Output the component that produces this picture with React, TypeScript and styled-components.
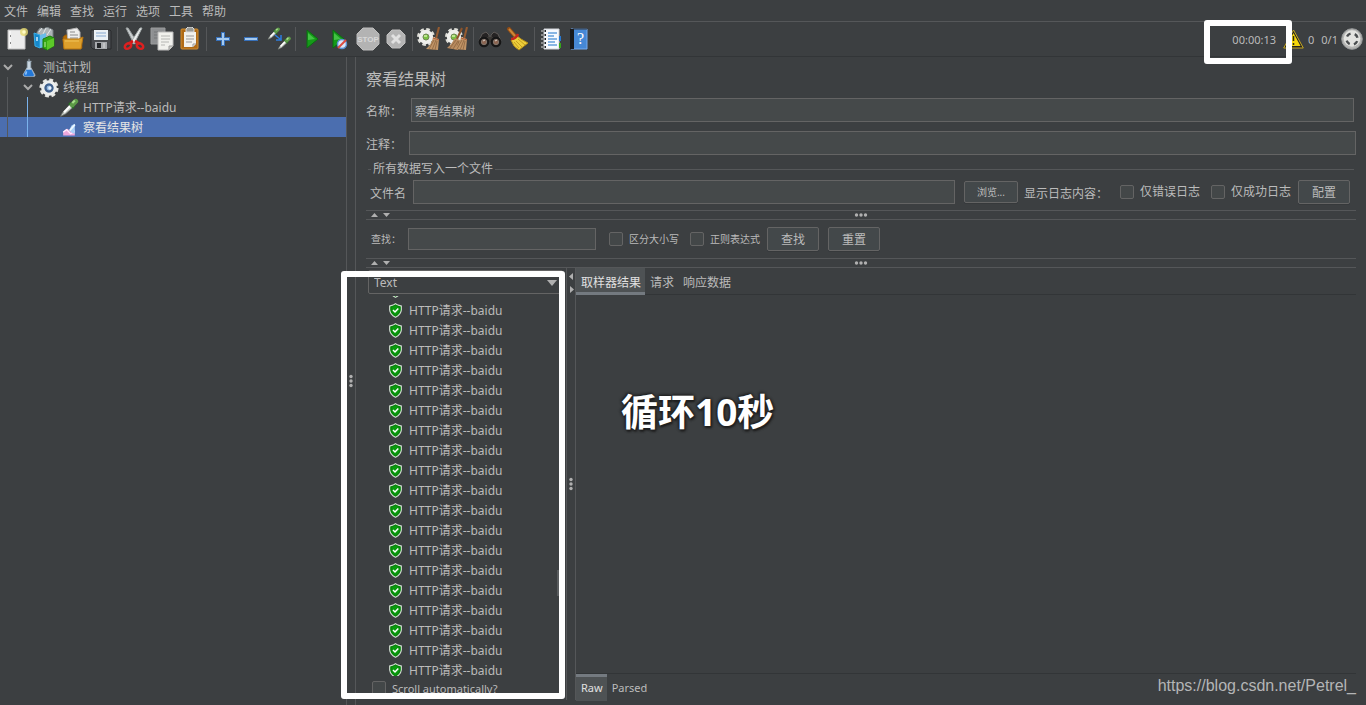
import React, { useLayoutEffect, useRef } from "react";
import styled, { createGlobalStyle } from "styled-components";

const c = {
  bg: "#3c3f41",
  field: "#45494a",
  border: "#646464",
  line: "#555759",
  dark: "#323537",
  text: "#bbbbbb",
  blue: "#4b6eaf",
  active: "#4e5254",
  bar: "#747a80",
};

const Global = createGlobalStyle`
  * { box-sizing: border-box; }
  body { margin: 0; background: ${c.bg}; }
  body, button, input, select { font-family: "Noto Sans", "Noto Sans CJK SC", sans-serif; color: ${c.text}; font-size: 12px; line-height: 18px; }
  svg { display: block; flex: none; }
`;

const Page = styled.div`
  height: 100vh;
  display: flex;
  flex-direction: column;
  overflow: hidden;
  white-space: nowrap;
`;
const MenuBar = styled.nav`
  display: flex;
  gap: 9px;
  height: 22px;
  padding: 3px 4px 0;
  border-bottom: 1px solid ${c.line};
`;
const MenuItem = styled.button`
  height: 18px;
  border: 0;
  padding: 0;
  background: none;
`;
const Toolbar = styled.div`
  position: relative;
  display: flex;
  align-items: center;
  height: 35px;
  padding: 0 3px;
  border-bottom: 1px solid ${c.dark};
`;
const ToolButton = styled.button`
  display: grid;
  place-items: center;
  width: 28px;
  height: 28px;
  padding: 0;
  border: 0;
  background: none;
`;
const ToolSeparator = styled.span`
  width: 1px;
  height: 24px;
  margin: 0 2px;
  background: ${c.line};
`;
const Status = styled.div`
  display: flex;
  align-items: center;
  margin-left: auto;
  font-size: 11px;
`;
const Elapsed = styled.span`
  padding-top: 2px;
  margin-right: 7px;
`;
const Count = styled.span`
  padding-top: 2px;
  margin: 0 3px 0 4px;
`;
const Highlight = styled.div`
  position: absolute;
  z-index: 2;
  border: 6px solid #fff;
  border-radius: 3px;
  pointer-events: none;
`;
const TimerHighlight = styled(Highlight)`
  top: -2px;
  right: 74px;
  width: 88px;
  height: 44px;
`;
const ResultsHighlight = styled(Highlight)`
  top: 214px;
  bottom: 6px;
  left: -15px;
  width: 224px;
`;
const Workspace = styled.div`
  display: flex;
  flex: 1;
  min-height: 0;
`;
const TreePanel = styled.aside`
  position: relative;
  width: 346px;
  flex: none;
`;
const TreeRow = styled.div<{ $level: number; $selected?: boolean }>`
  display: flex;
  align-items: center;
  gap: 4px;
  height: 20px;
  padding-top: 2px;
  padding-left: ${(p) => 3 + p.$level * 20}px;
  background: ${(p) => (p.$selected ? c.blue : "transparent")};
  color: ${(p) => (p.$selected ? "#e4e4e4" : c.text)};
`;
const Toggle = styled.span`
  display: flex;
  width: 12px;
`;
const Guide = styled.span<{ $level: number }>`
  position: absolute;
  left: ${(p) => 7 + p.$level * 20}px;
  top: ${(p) => 20 + p.$level * 20}px;
  height: ${(p) => 60 - p.$level * 20}px;
  width: 1px;
  background: ${(p) => (p.$level ? "#7ab2ec" : "#56595b")};
`;
const VerticalSplit = styled.div`
  position: relative;
  display: flex;
  flex-direction: column;
  align-items: center;
  justify-content: center;
  width: 10px;
  flex: none;
  border: solid ${c.line};
  border-width: 0 1px;
`;
const SplitArrows = styled.span`
  position: absolute;
  top: 4px;
  left: 0;
`;
const Editor = styled.main`
  position: relative;
  display: flex;
  flex-direction: column;
  flex: 1;
  min-width: 0;
  padding: 10px 10px 5px;
`;
const Title = styled.h1`
  margin: 0 0 7px;
  font-size: 16px;
  line-height: 24px;
  font-weight: 400;
`;
const FieldRow = styled.div<{ $inset?: boolean }>`
  display: flex;
  align-items: center;
  margin-bottom: ${(p) => (p.$inset ? 9 : 5)}px;
  padding-right: ${(p) => (p.$inset ? 2 : 0)}px;
`;
const FieldLabel = styled.label<{ $width: number }>`
  width: ${(p) => p.$width}px;
  flex: none;
  padding-top: 3px;
`;
const TextField = styled.input<{ $width?: number; $height?: number }>`
  flex: ${(p) => (p.$width ? "none" : "1")};
  width: ${(p) => (p.$width ? p.$width + "px" : "auto")};
  min-width: 0;
  height: ${(p) => p.$height ?? 24}px;
  padding: 2px 3px 0;
  border: 1px solid ${c.border};
  background: ${c.field};
  outline: 0;
`;
const FileGroup = styled.fieldset`
  min-width: 0;
  margin: 0 2px;
  padding: 2px 4px 6px 2px;
  border: 0;
  border-top: 1px solid ${c.line};
`;
const Legend = styled.legend`
  margin-left: 1px;
  padding: 0 2px;
`;
const FileRow = styled.div`
  display: flex;
  align-items: center;
`;
const Button = styled.button<{ $small?: boolean }>`
  width: ${(p) => (p.$small ? 54 : 52)}px;
  height: ${(p) => (p.$small ? 22 : 24)}px;
  padding: ${(p) => (p.$small ? 0 : 2)}px 0 0;
  border: 1px solid ${c.border};
  border-radius: 2px;
  background: #43484a;
  box-shadow: 0 1px 0 #36393b;
  font-size: ${(p) => (p.$small ? 10 : 12)}px;
`;
const BrowseButton = styled(Button)`
  margin: 0 6px 0 9px;
`;
const LogLabel = styled.span`
  width: 96px;
  padding-top: 3px;
`;
const Check = styled.label<{ $small?: boolean; $gap?: number }>`
  display: flex;
  align-items: center;
  gap: 6px;
  margin-right: ${(p) => p.$gap ?? 0}px;
  font-size: ${(p) => (p.$small ? 10 : 12)}px;
`;
const Box = styled.input`
  appearance: none;
  width: 14px;
  height: 14px;
  margin: 0;
  border: 1px solid ${c.border};
  border-radius: 2px;
  background: #434748;
`;
const HorizontalSplit = styled.div`
  display: grid;
  grid-template-columns: 1fr auto 1fr;
  align-items: center;
  height: 10px;
  flex: none;
  padding: 0 5px;
  border: solid ${c.line};
  border-width: 1px 0;
`;
const SearchRow = styled.div`
  display: flex;
  align-items: center;
  height: 38px;
  flex: none;
  padding-left: 5px;
`;
const SearchLabel = styled.label`
  width: 37px;
  font-size: 10px;
`;
const SearchOptions = styled.div`
  display: flex;
  margin-left: 13px;
`;
const SearchButtons = styled.div`
  display: flex;
  gap: 9px;
`;
const Results = styled.div`
  display: flex;
  flex: 1;
  min-height: 0;
`;
const SamplePane = styled.section`
  display: flex;
  flex-direction: column;
  width: 200px;
  flex: none;
  padding-top: 2px;
`;
const Combo = styled.div`
  position: relative;
  margin: 0 3px 2px 2px;
`;
const Select = styled.select`
  display: block;
  appearance: none;
  width: 100%;
  height: 24px;
  padding: 2px 5px 0;
  border: 1px solid ${c.border};
  border-radius: 2px;
  background: ${c.bg};
  outline: 0;
`;
const ComboArrow = styled.span`
  position: absolute;
  top: 10px;
  right: 6px;
  pointer-events: none;
`;
const SampleScroll = styled.div`
  position: relative;
  flex: 1;
  min-height: 0;
`;
const SampleList = styled.ul`
  height: 100%;
  margin: 0;
  padding: 0;
  overflow: hidden;
  list-style: none;
`;
const Sample = styled.li`
  display: flex;
  align-items: center;
  gap: 7px;
  height: 20px;
  padding-left: 23px;
`;
const Thumb = styled.span`
  position: absolute;
  right: 2px;
  top: 72%;
  width: 7px;
  height: 26px;
  background: #595c5e;
`;
const AutoScroll = styled.div`
  height: 24px;
  padding: 2px 6px;
`;
const AutoScrollText = styled.span`
  padding-top: 2px;
  font-size: 11px;
`;
const Detail = styled.section`
  display: flex;
  flex-direction: column;
  flex: 1;
  min-width: 0;
`;
const Tabs = styled.div<{ $bottom?: boolean }>`
  display: flex;
  height: 27px;
  flex: none;
  border: solid ${c.dark};
  border-width: ${(p) => (p.$bottom ? "1px 0 0" : "0 0 1px")};
`;
const Tab = styled.button<{ $active?: boolean; $bottom?: boolean }>`
  height: 27px;
  padding: ${(p) => (p.$bottom ? 0 : 3)}px 4px 0 5px;
  border: 0;
  font-size: ${(p) => (p.$bottom ? 11 : 12)}px;
  background: ${(p) => (p.$active ? c.active : "transparent")};
  color: ${(p) => (p.$active ? "#e0e0e0" : c.text)};
  box-shadow: ${(p) => (p.$active ? `inset 0 ${p.$bottom ? 3 : -3}px 0 ${c.bar}` : "none")};
`;
const DetailBody = styled.div`
  flex: 1;
`;
const Caption = styled.div`
  position: absolute;
  left: 265px;
  top: 328px;
  color: #fff;
  font: 700 37px/54px "Noto Sans", "Noto Sans CJK SC", sans-serif;
  text-shadow: 0 0 3px #202020, 1px 1px 3px #202020, -1px -1px 3px #202020, 1px 2px 2px #202020;
`;
const Watermark = styled.div`
  position: absolute;
  right: 10px;
  bottom: 8px;
  color: #b4b5b6;
  font: 16px/22px "Liberation Sans", sans-serif;
`;

const Svg = ({ size = 24, children }: { size?: number; children: React.ReactNode }) => (
  <svg width={size} height={size} viewBox="0 0 24 24" fill="none" aria-hidden="true">{children}</svg>
);

const Pipette = ({ x = 0, y = 0, s = 1 }: { x?: number; y?: number; s?: number }) => (
  <g transform={`translate(${x} ${y}) scale(${s})`}>
    <path d="M2 22L4 18L13 8L17 11L8 19Z" fill="#c9cec9" stroke="#737a73" strokeWidth="1" />
    <path d="M6 17L14 9" stroke="#fff" strokeWidth="2.5" />
    <path d="M12 6L18 12" stroke="#286a25" strokeWidth="3" />
    <path d="M16 8L20 4" stroke="#5c9a47" strokeWidth="6" strokeLinecap="round" />
    <path d="M16 6L19 3" stroke="#a8dc8c" strokeWidth="2.5" />
  </g>
);

const GearWithBroom = ({ double = false }: { double?: boolean }) => (
  <Svg>
    <circle cx="9" cy="10" r="7" stroke="#deded8" strokeWidth="4" strokeDasharray="3.3 2.2" />
    <circle cx="9" cy="10" r="5.2" fill="#ddd" stroke="#efefec" strokeWidth="4" />
    <circle cx="9" cy="10" r="3" fill="#7ac143" stroke="#728a55" />
    <path d="M7 9H10" stroke="#d4f0a8" strokeWidth="1.5" />
    {double && <><path d="M17 1L12 12" stroke="#8d542b" strokeWidth="2" /><path d="M10 11L15 13L13 23L2 21Q7 17 10 11" fill="#b88a5e" /><path d="M11 13L5 21M13 14L8 22M14 14L11 23" stroke="#8b6540" strokeWidth=".8" /></>}
    <path d="M22 0L19 12" stroke="#955b30" strokeWidth="2" />
    <path d="M16 10L22 12L21 23L9 22Q15 17 16 10" fill="#c09466" />
    <path d="M17 13L12 22M19 13L15 23M20 14L18 23" stroke="#8b6540" strokeWidth=".8" />
    <path d="M16 11L22 13" stroke="#b5603d" />
  </Svg>
);

const icons: Record<string, React.ReactNode> = {
  new: (
    <Svg>
      <path d="M3 3H20V22H3Z" fill="#ececec" stroke="#c3c3c3" />
      <path d="M5 4V21" stroke="#fff" /><path d="M5 9H6M5 16H6" stroke="#666" strokeWidth="1.5" />
      <circle cx="19" cy="5" r="4" fill="#e9dc72" opacity=".8" /><circle cx="19" cy="5" r="1.8" fill="#fffbc5" />
    </Svg>
  ),
  templates: (
    <Svg>
      <path d="M4 5L7 1L11 2L14 0L20 3V14H4Z" fill="#aeb4b7" stroke="#747c80" />
      <path d="M6 5L9 1M10 7L13 1M14 8L18 2" stroke="#e5e8e8" />
      <path d="M1 6L7 8V21L2 19Z" fill="#1688cb" stroke="#39aee8" /><path d="M7 8L13 6V20L7 21Z" fill="#69bce8" />
      <path d="M4 10V14" stroke="#d0edff" strokeWidth="1.5" />
      <path d="M10 12L17 9L21 11V19L14 23L10 21Z" fill="#35a713" stroke="#1b7c0b" /><path d="M14 14L21 11V19L14 23Z" fill="#5cc829" />
      <path d="M12 15V20" stroke="#bbed9c" />
    </Svg>
  ),
  open: (
    <Svg>
      <path d="M2 10L4 8H8L10 10H20L21 21H3Z" fill="#b36b05" stroke="#8a5510" />
      <path d="M6 3L16 1L19 5V16H7Z" fill="#eee" stroke="#b3b3b3" /><path d="M9 5H14M9 8H17M9 11H17" stroke="#8a8a8a" />
      <path d="M2 12H18L22 10L20 22H3Z" fill="#dda02c" stroke="#b97610" /><path d="M4 14H18" stroke="#f0c45b" />
    </Svg>
  ),
  save: (
    <Svg>
      <path d="M2 3H21L22 4V22H4L2 20Z" fill="#4a4c50" stroke="#292b2d" />
      <path d="M5 3H19V13H5Z" fill="#ebf0f5" /><path d="M7 6H17M7 9H17" stroke="#86a7cf" />
      <path d="M6 15H18V22H6Z" fill="#a8aaae" /><path d="M8 16H12V21H8Z" fill="#25272a" /><path d="M15 16V21" stroke="#ddd" />
    </Svg>
  ),
  cut: (
    <Svg>
      <path d="M4 1L6 1L15 15L12 17Z" fill="#ccd0d1" stroke="#9ba1a2" /><path d="M20 1L18 1L9 15L12 17Z" fill="#eceeee" stroke="#a7aeae" />
      <path d="M11 14L6 17M13 14L18 17" stroke="#cf1717" strokeWidth="3" />
      <ellipse cx="6" cy="19" rx="3.5" ry="2.5" transform="rotate(-35 6 19)" stroke="#dd2020" strokeWidth="2.5" />
      <ellipse cx="18" cy="19" rx="3.5" ry="2.5" transform="rotate(35 18 19)" stroke="#dd2020" strokeWidth="2.5" />
    </Svg>
  ),
  copy: (
    <Svg>
      <path d="M1 1H15V17H1Z" fill="#8e9092" stroke="#9a9c9d" /><path d="M4 5H12M4 8H9M4 11H8" stroke="#747678" />
      <path d="M8 5H23V19L19 23H8Z" fill="#f1f1ed" stroke="#bbb" /><path d="M11 9H20M11 12H20M11 15H19M11 18H15" stroke="#b5b6b3" />
      <path d="M19 23V19H23" fill="#cfcfc9" stroke="#999" />
    </Svg>
  ),
  paste: (
    <Svg>
      <rect x="3" y="2" width="17" height="20" rx="1" fill="#b06b15" stroke="#cf8f32" />
      <path d="M6 5H18V17L15 20H6Z" fill="#f2f2ec" /><path d="M8 9H16M8 12H16M8 15H14" stroke="#999" />
      <path d="M8 2L10 0H14L16 2V5H8Z" fill="#999b96" stroke="#ddd" /><path d="M15 20V17H18" stroke="#999" />
    </Svg>
  ),
  plus: <Svg><path d="M12 5V19M5 12H19" stroke="#3770b9" strokeWidth="4" /><path d="M12 6V18M6 12H18" stroke="#a5caef" strokeWidth="2" /></Svg>,
  minus: <Svg><path d="M5 12H19" stroke="#3770b9" strokeWidth="4" /><path d="M6 12H18" stroke="#a5caef" strokeWidth="2" /></Svg>,
  toggle: <Svg><Pipette x={0} y={0} s={0.56} /><Pipette x={10} y={9} s={0.6} /><path d="M8 8L13 12M14 8V13H9" stroke="#2c7ee0" strokeWidth="1.5" /></Svg>,
  start: <Svg><path d="M7 3L18 12L7 21Z" fill="#159a19" stroke="#0a6d10" /><path d="M8 6L15 12L8 13Z" fill="#43c244" /></Svg>,
  startNow: (
    <Svg><path d="M5 3L16 12L5 21Z" fill="#159a19" stroke="#0a6d10" /><path d="M6 6L13 12L6 13Z" fill="#43c244" />
      <circle cx="14" cy="17" r="4.5" fill="#dbe8f8" stroke="#5b91d1" strokeWidth="1.5" /><path d="M10 21L18 13" stroke="#dc4c41" strokeWidth="2" /></Svg>
  ),
  stop: (
    <Svg><path d="M7 1H17L23 7V17L17 23H7L1 17V7Z" fill="#b3b3b3" stroke="#bebebe" />
      <text x="12" y="15" textAnchor="middle" fontFamily="Liberation Sans" fontWeight="700" fontSize="8" fill="#d8d8d8">STOP</text></Svg>
  ),
  shutdown: <Svg><path d="M8 3H16L21 8V16L16 21H8L3 16V8Z" fill="#b4b4b4" stroke="#c0c0c0" /><path d="M8 8L16 16M16 8L8 16" stroke="#e1e1e1" strokeWidth="3" /></Svg>,
  clear: <GearWithBroom />,
  clearAll: <GearWithBroom double />,
  search: (
    <Svg>
      <path d="M4 7L8 5L11 8V14H1Z" fill="#252323" stroke="#5e5a57" /><path d="M20 7L16 5L13 8V14H23Z" fill="#252323" stroke="#5e5a57" />
      <path d="M9 10H15V15H9Z" fill="#393633" />
      <circle cx="6" cy="15" r="4.3" fill="#3c2e29" stroke="#161616" strokeWidth="2" /><circle cx="18" cy="15" r="4.3" fill="#3c2e29" stroke="#161616" strokeWidth="2" />
      <circle cx="6" cy="15" r="2.6" fill="#8c6450" stroke="#81766d" /><circle cx="18" cy="15" r="2.6" fill="#8c6450" stroke="#81766d" /><path d="M5 14L7 13M17 14L19 13" stroke="#ddd0c8" />
    </Svg>
  ),
  reset: (
    <Svg>
      <path d="M3 2L9 9" stroke="#8e4b16" strokeWidth="4" strokeLinecap="round" /><path d="M3 2L9 9" stroke="#ce8737" strokeWidth="2" />
      <path d="M10 8L15 12L22 16L13 23Q7 20 5 13Z" fill="#edcf3a" stroke="#b38c18" />
      <path d="M10 14L16 20M12 12L19 18M8 15L13 21" stroke="#c59d20" /><path d="M5 12Q10 12 12 7" stroke="#c52820" strokeWidth="2.5" />
    </Svg>
  ),
  functions: (
    <Svg>
      <path d="M5 2H20V22H5Z" fill="#f7faff" stroke="#d1d4d9" /><path d="M9 6H18M9 9H15M9 12H18M9 15H16M9 18H18" stroke="#1d72ca" strokeWidth="1.2" />
      <path d="M2 4H7M2 8H7M2 12H7M2 16H7M2 20H7" stroke="#202428" strokeWidth="2" /><path d="M2 4H6M2 8H6M2 12H6M2 16H6M2 20H6" stroke="#f1f1f1" />
      <path d="M21 9V14" stroke="#2778d0" strokeWidth="2" /><path d="M21 16V21" stroke="#37a51a" strokeWidth="2" />
    </Svg>
  ),
  help: (
    <Svg>
      <path d="M4 2H20V22H4Z" fill="#4688d6" stroke="#75aaf0" /><path d="M3 2H7V22H3Z" fill="#17191d" /><path d="M6 2H20" stroke="#252a30" />
      <text x="13.5" y="17" textAnchor="middle" fontFamily="Liberation Serif" fontSize="16" fill="#fff">?</text>
    </Svg>
  ),
};

const toolGroups: [string, string][][] = [
  [["new", "新建"], ["templates", "模板"], ["open", "打开"], ["save", "保存"]],
  [["cut", "剪切"], ["copy", "复制"], ["paste", "粘贴"]],
  [["plus", "展开"], ["minus", "收起"], ["toggle", "切换"]],
  [["start", "启动"], ["startNow", "立即启动"], ["stop", "停止"], ["shutdown", "关闭"]],
  [["clear", "清除"], ["clearAll", "清除全部"]],
  [["search", "查找"], ["reset", "重置查找"]],
  [["functions", "函数助手"], ["help", "帮助"]],
];

const Chevron = () => (
  <svg width="10" height="12" viewBox="0 0 10 12" fill="none"><path d="M1 3L5 7L9 3" stroke="#aaaaaa" strokeWidth="2" /></svg>
);
const Flask = () => (
  <Svg size={20}>
    <path d="M12 1V4M10 4H15M10 4V11L5 20Q5 22 7 22H18Q20 22 19 20L14 11V4" fill="#c9d6e1" stroke="#9dacba" strokeWidth="1.2" />
    <path d="M9 14H15L18 20Q18 22 16 22H8Q5 22 6 19Z" fill="#2478d7" /><path d="M9 16L8 20" stroke="#8cc4ff" strokeWidth="2" />
  </Svg>
);
const Gear = () => (
  <Svg size={20}>
    <circle cx="12" cy="12" r="9" stroke="#e6e6e2" strokeWidth="5" strokeDasharray="4.2 2.87" />
    <circle cx="12" cy="12" r="7.4" fill="#7395bd" stroke="#eceeed" strokeWidth="4" />
    <circle cx="12" cy="12" r="4.2" fill="#8fb5dd" stroke="#40608b" strokeWidth="2.5" /><circle cx="13" cy="12" r="2" fill="#e8f2fc" />
  </Svg>
);
const ResultChart = () => (
  <Svg size={20}>
    <path d="M5 21V16L10 13L14 16L19 14V21Z" fill="#efa8dd" /><path d="M5 17L9 14L14 19L19 16" stroke="#fff0ff" strokeWidth="1.5" />
    <path d="M12 15L15 9L19 7V19L16 18Z" fill="#a8d0f8" /><path d="M13 15L19 8" stroke="#eff8ff" strokeWidth="2" />
  </Svg>
);
const Shield = () => (
  <svg width="13" height="16" viewBox="0 0 13 16" fill="none">
    <path d="M6.5 .7L9 2.2L12.3 3V7Q12 11.5 6.5 14.3Q1 11.5 .7 7V3L4 2.2Z" fill="#099b0d" stroke="#d4dcd4" strokeWidth="1.2" />
    <path d="M6.5 2L11 4V7Q10.8 10.5 6.5 12.8Q2.2 10.5 2 7V4Z" stroke="#087008" strokeWidth=".7" />
    <path d="M4 7L6 9L9.3 5.5" stroke="#fff" strokeWidth="1.5" />
  </svg>
);
const Warning = () => (
  <svg width="21" height="20" viewBox="0 0 21 20" fill="none">
    <path d="M10.5 1L20.3 19H.7Z" fill="#222" stroke="#c9aa20" /><path d="M10.5 4L17.5 17H3.5Z" fill="#f5d60a" /><path d="M10.5 7V12M10.5 14V16" stroke="#302b12" strokeWidth="1.5" />
  </svg>
);
const Threads = () => (
  <svg width="22" height="22" viewBox="0 0 22 22" fill="none">
    <circle cx="11" cy="11" r="10.3" fill="#b5b5b3" stroke="#999b9c" /><circle cx="11" cy="10.5" r="8.3" fill="#e3e3e0" />
    <circle cx="11" cy="11" r="5.6" stroke="#4a4d4f" strokeWidth="2.4" strokeDasharray="4.4 4.4" strokeDashoffset="-2.2" />
  </svg>
);
const UpDown = () => (
  <svg width="20" height="6" viewBox="0 0 20 6"><path d="M0 5H7L3.5 1ZM12 1H19L15.5 5Z" fill="#b0b0b0" /></svg>
);
const LeftRight = () => (
  <svg width="8" height="22" viewBox="0 0 8 22"><path d="M6 1V8L2 4.5ZM3 14V21L7 17.5Z" fill="#b0b0b0" /></svg>
);
const Dots = ({ vertical = false }: { vertical?: boolean }) => (
  <svg width={vertical ? 4 : 14} height={vertical ? 14 : 4} viewBox={vertical ? "0 0 4 14" : "0 0 14 4"}>
    {[2.5, 7, 11.5].map((n) => <circle key={n} cx={vertical ? 2 : n} cy={vertical ? n : 2} r="1.7" fill="#b0b0b0" />)}
  </svg>
);

export default function App() {
  const list = useRef<HTMLUListElement>(null);
  useLayoutEffect(() => {
    if (list.current) list.current.scrollTop = 15;
  }, []);

  return (
    <Page>
      <Global />
      <MenuBar>
        {["文件", "编辑", "查找", "运行", "选项", "工具", "帮助"].map((m) => <MenuItem key={m}>{m}</MenuItem>)}
      </MenuBar>
      <Toolbar>
        {toolGroups.map((group, i) => (
          <React.Fragment key={i}>
            {i > 0 && <ToolSeparator />}
            {group.map(([id, label]) => <ToolButton key={id} aria-label={label}>{icons[id]}</ToolButton>)}
          </React.Fragment>
        ))}
        <Status>
          <Elapsed>00:00:13</Elapsed>
          <Warning />
          <Count>0</Count>
          <Count>0/1</Count>
          <Threads />
        </Status>
        <TimerHighlight />
      </Toolbar>
      <Workspace>
        <TreePanel>
          <TreeRow $level={0}><Toggle><Chevron /></Toggle><Flask />测试计划</TreeRow>
          <TreeRow $level={1}><Toggle><Chevron /></Toggle><Gear />线程组</TreeRow>
          <TreeRow $level={2}><Toggle /><Svg size={20}><Pipette /></Svg>HTTP请求--baidu</TreeRow>
          <TreeRow $level={2} $selected><Toggle /><ResultChart />察看结果树</TreeRow>
          <Guide $level={0} />
          <Guide $level={1} />
        </TreePanel>
        <VerticalSplit><Dots vertical /></VerticalSplit>
        <Editor>
          <Title>察看结果树</Title>
          <FieldRow $inset>
            <FieldLabel $width={45} htmlFor="name">名称：</FieldLabel>
            <TextField id="name" defaultValue="察看结果树" />
          </FieldRow>
          <FieldRow>
            <FieldLabel $width={43} htmlFor="comment">注释：</FieldLabel>
            <TextField id="comment" />
          </FieldRow>
          <FileGroup>
            <Legend>所有数据写入一个文件</Legend>
            <FileRow>
              <FieldLabel $width={43} htmlFor="file">文件名</FieldLabel>
              <TextField id="file" />
              <BrowseButton $small>浏览...</BrowseButton>
              <LogLabel>显示日志内容：</LogLabel>
              <Check $gap={11}><Box type="checkbox" />仅错误日志</Check>
              <Check $gap={7}><Box type="checkbox" />仅成功日志</Check>
              <Button>配置</Button>
            </FileRow>
          </FileGroup>
          <HorizontalSplit><UpDown /><Dots /></HorizontalSplit>
          <SearchRow>
            <SearchLabel htmlFor="search">查找：</SearchLabel>
            <TextField id="search" $width={188} $height={22} />
            <SearchOptions>
              <Check $small $gap={11}><Box type="checkbox" />区分大小写</Check>
              <Check $small $gap={7}><Box type="checkbox" />正则表达式</Check>
            </SearchOptions>
            <SearchButtons><Button>查找</Button><Button>重置</Button></SearchButtons>
          </SearchRow>
          <HorizontalSplit><UpDown /><Dots /></HorizontalSplit>
          <Results>
            <SamplePane>
              <Combo>
                <Select aria-label="渲染器"><option>Text</option></Select>
                <ComboArrow><svg width="10" height="6" viewBox="0 0 10 6"><path d="M0 0H10L5 6Z" fill="#b0b0b0" /></svg></ComboArrow>
              </Combo>
              <SampleScroll>
                <SampleList ref={list}>
                  {Array.from({ length: 20 }, (_, i) => <Sample key={i}><Shield />HTTP请求--baidu</Sample>)}
                </SampleList>
                <Thumb />
              </SampleScroll>
              <AutoScroll>
                <Check><Box type="checkbox" /><AutoScrollText>Scroll automatically?</AutoScrollText></Check>
              </AutoScroll>
            </SamplePane>
            <VerticalSplit><SplitArrows><LeftRight /></SplitArrows><Dots vertical /></VerticalSplit>
            <Detail>
              <Tabs><Tab $active>取样器结果</Tab><Tab>请求</Tab><Tab>响应数据</Tab></Tabs>
              <DetailBody />
              <Tabs $bottom><Tab $active $bottom>Raw</Tab><Tab $bottom>Parsed</Tab></Tabs>
            </Detail>
          </Results>
          <ResultsHighlight />
          <Caption>循环10秒</Caption>
          <Watermark>https://blog.csdn.net/Petrel_</Watermark>
        </Editor>
      </Workspace>
    </Page>
  );
}
